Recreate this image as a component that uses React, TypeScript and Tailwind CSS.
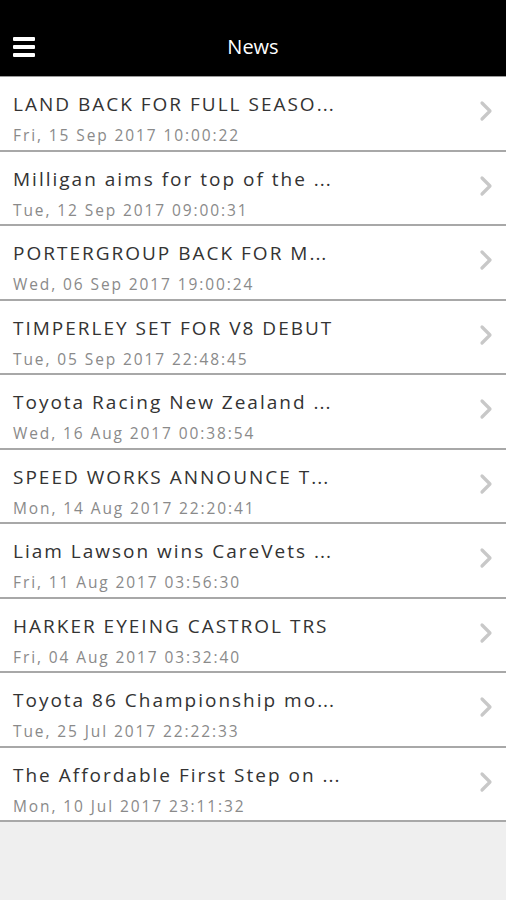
import React from "react";

const items = [
  ["LAND BACK FOR FULL SEASO...", "Fri, 15 Sep 2017 10:00:22"],
  ["Milligan aims for top of the ...", "Tue, 12 Sep 2017 09:00:31"],
  ["PORTERGROUP BACK FOR M...", "Wed, 06 Sep 2017 19:00:24"],
  ["TIMPERLEY SET FOR V8 DEBUT", "Tue, 05 Sep 2017 22:48:45"],
  ["Toyota Racing New Zealand ...", "Wed, 16 Aug 2017 00:38:54"],
  ["SPEED WORKS ANNOUNCE T...", "Mon, 14 Aug 2017 22:20:41"],
  ["Liam Lawson wins CareVets ...", "Fri, 11 Aug 2017 03:56:30"],
  ["HARKER EYEING CASTROL TRS", "Fri, 04 Aug 2017 03:32:40"],
  ["Toyota 86 Championship mo...", "Tue, 25 Jul 2017 22:22:33"],
  ["The Affordable First Step on ...", "Mon, 10 Jul 2017 23:11:32"],
];

function Title({ t }: { t: string }) {
  if (t.endsWith("...")) {
    return (
      <>
        {t.slice(0, -3)}
        <span className="tracking-[1px]">...</span>
      </>
    );
  }
  return <>{t}</>;
}

export default function App() {
  return (
    <div className="w-[506px] h-[900px] bg-[#efefef] flex flex-col" style={{ fontFamily: '"Open Sans", "Noto Sans", sans-serif' }}>
      <div className="h-[77px] bg-black border-b border-[#9a9a9a] flex items-center relative shrink-0">
        <div className="absolute left-[13px] top-[37px] flex flex-col gap-[4px]">
          <div className="w-[22px] h-[4px] bg-white rounded-[1px]" />
          <div className="w-[22px] h-[4px] bg-white rounded-[1px]" />
          <div className="w-[22px] h-[4px] bg-white rounded-[1px]" />
        </div>
        <div className="flex-1 text-center text-white text-[20px] leading-[26px] mt-[17px]">News</div>
      </div>
      {items.map(([t, d], i) => (
        <div key={i} className="h-[74.5px] shrink-0 bg-white border-b-2 border-[#a8a8a8] flex items-start pl-[13px] pr-[12px]">
          <div className="flex-1 flex flex-col pt-[14px]">
            <div className="text-[19px] leading-[26px] text-[#333333] tracking-[2px] whitespace-nowrap">
              <Title t={t} />
            </div>
            <div className="text-[15.5px] leading-[20px] text-[#8a8a8a] tracking-[1.9px] mt-[8px] whitespace-nowrap">{d}</div>
          </div>
          <svg width="16" height="22" viewBox="0 0 16 22" className="mt-[23px]">
            <path d="M4 3 L12 11 L4 19" fill="none" stroke="#c8c8c8" strokeWidth="3.2" strokeLinecap="round" strokeLinejoin="round" />
          </svg>
        </div>
      ))}
    </div>
  );
}
